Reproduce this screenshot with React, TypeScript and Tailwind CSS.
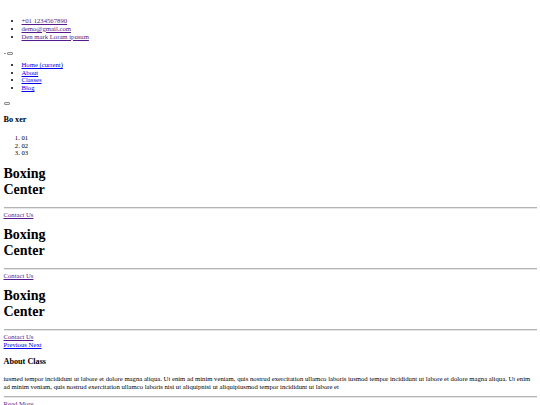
const contacts = ['+01 1234567890', 'demo@gmail.com', 'Den mark Loram ipusum'];
const navLinks = ['Home (current)', 'About', 'Classes', 'Blog'];
const slides = [1, 2, 3];

const para =
  'iusmed tempor incididunt ut labore et dolore magna aliqua. Ut enim ad minim veniam, quis nostrud exercitation ullamco laboris iusmod tempor incididunt ut labore et dolore magna aliqua. Ut enim ad minim veniam, quis nostrud exercitation ullamco laboris nisi ut aliquipnisi ut aliquipiusmod tempor incididunt ut labore et';

function EmptyButton() {
  return (
    <button className="inline-block h-[3px] w-[6px] rounded-[1px] border border-[#8f8f8f] bg-[#efefef] align-middle" />
  );
}

function Rule({ className = '' }: { className?: string }) {
  return <hr className={'border-0 border-t border-b border-t-[#b4b4b4] border-b-[#e6e6e6] ' + className} />;
}

function Slide() {
  return (
    <div>
      <h1 className="mt-[9px] text-[14px] leading-[16px] font-bold">
        Boxing
        <br />
        Center
      </h1>
      <Rule className="mt-[8.5px]" />
      <a href="#" className="mt-[2px] block w-fit text-[#551a8b] underline">Contact Us</a>
    </div>
  );
}

export default function App() {
  return (
    <div className="min-h-[405px] bg-white px-[3.5px] pt-[3.5px] text-[6.7px] leading-[7.7px] text-black [font-family:'Liberation_Serif',serif]">
      <header>
        <ul className="mt-[13.6px] list-disc pl-[18px]">
          {contacts.map((c) => (
            <li key={c}>
              <a href="#" className="text-[#551a8b] underline">
                {' '}
                {c}
              </a>
            </li>
          ))}
        </ul>
        <div className="mt-[9.8px] flex h-[6px] items-center gap-[1px]">
          <span className="inline-block h-px w-[2px] bg-[#999]" />
          <EmptyButton />
        </div>
        <ul className="mt-[5px] list-disc pl-[18px]">
          {navLinks.map((n) => (
            <li key={n}>
              <a href="#" className="text-[#0000ee] underline">{n}</a>
            </li>
          ))}
        </ul>
        <div className="mt-[8px] flex h-[8px] items-center">
          <EmptyButton />
        </div>
      </header>

      <section>
        <h3 className="mt-[7.2px] text-[8.2px] leading-[9.5px] font-bold">Bo xer</h3>
        <ol className="mt-[9.4px] list-decimal pl-[18px]">
          {slides.map((i) => (
            <li key={i}>0{i}</li>
          ))}
        </ol>
        {slides.map((i) => (
          <Slide key={i} />
        ))}
        <a href="#" className="block w-fit text-[#0000ee] underline">Previous Next</a>
      </section>

      <section>
        <h3 className="mt-[8.2px] text-[8.2px] leading-[9.5px] font-bold">About Class</h3>
        <p className="mt-[9.4px]">{para}</p>
        <Rule className="mt-[5.5px]" />
        <a href="#" className="mt-[2px] block w-fit text-[#551a8b] underline">Read More</a>
      </section>
    </div>
  );
}
